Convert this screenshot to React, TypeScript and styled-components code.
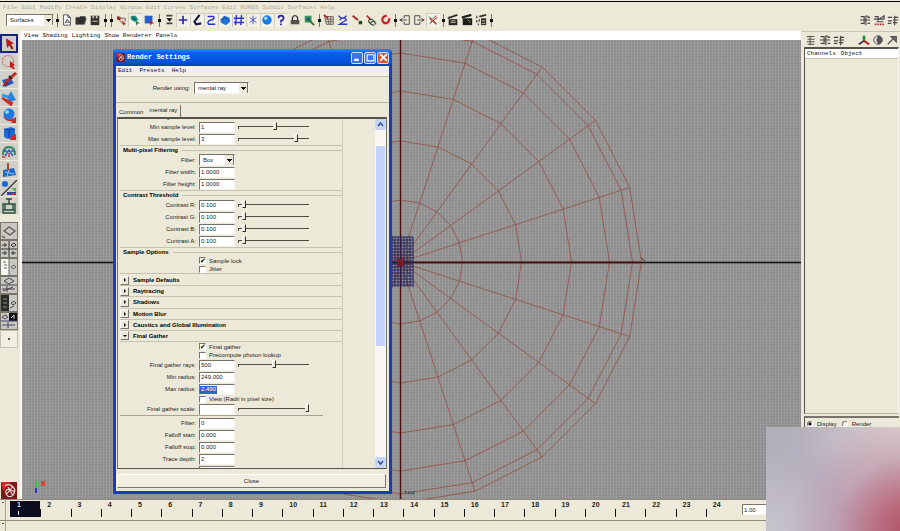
import React from "react";
import styled, { createGlobalStyle, css } from "styled-components";

const GlobalStyle = createGlobalStyle`
  *, *::before, *::after { box-sizing: border-box; }
  body { margin: 0; overflow: hidden; background: #ece9d8; }
  button, input, select { margin: 0; padding: 0; border: 0; border-radius: 0; font: inherit; color: inherit; background: none; }
`;

const sans = '"Liberation Sans", Arial, sans-serif';
const mono = '"Liberation Mono", "Courier New", monospace';
const face = "#ece9d8";

/* ---------- frame of the application ---------- */

const Page = styled.div`
  position: relative;
  display: flex;
  flex-direction: column;
  height: 100vh;
  padding-top: 1px;
  background: ${face};
  color: #222;
  font: 6px/8px ${sans};
`;

const MenuBar = styled.nav`
  display: flex;
  gap: 4px;
  height: 11px;
  padding: 2px 3px 0;
  border-top: 1px solid #000;
  font: 6px/8px ${mono};
  color: #aeab9c;
`;

const MenuItem = styled.button`
  white-space: nowrap;
`;

const Toolbar = styled.div`
  display: flex;
  align-items: center;
  height: 19px;
  padding: 0 0 3px 6px;
`;

const Spacer = styled.div`
  flex: 1;
`;

const Separator = styled.span`
  position: relative;
  width: 6px;
  height: 13px;
  background: linear-gradient(#77756a, #77756a) 3px 0 / 1px 100% no-repeat;
  &::after {
    content: "";
    position: absolute;
    left: 2px;
    top: 5px;
    width: 3px;
    height: 3px;
    background: #111;
  }
`;

const IconButton = styled.button<{ $on?: boolean }>`
  display: grid;
  place-items: center;
  width: 14px;
  height: 14px;
  ${(p) => p.$on && css`background: #f3f1e6; box-shadow: inset 1px 1px #cfccbd;`}
  svg { display: block; width: 12px; height: 12px; }
`;

const Select = styled.select<{ $w: number }>`
  appearance: none;
  width: ${(p) => p.$w}px;
  height: 12px;
  padding: 0 3px;
  font: 6px/10px ${sans};
  border: 1px solid;
  border-color: #77756a #f6f4ea #f6f4ea #77756a;
  background:
    conic-gradient(from 315deg at 50% 100%, #111 90deg, transparent 0) right 2px top 4px / 5px 3px no-repeat,
    linear-gradient(90deg, ${face} 8px, #77756a 8px) right 0 top 0 / 9px 10px no-repeat,
    #fff;
`;

const Main = styled.main`
  display: flex;
  flex: 1;
  min-height: 0;
`;

/* ---------- tool box ---------- */

const ToolBox = styled.aside`
  display: flex;
  flex-direction: column;
  align-items: center;
  width: 22px;
  padding: 3px 3px 0 1px;
  border-right: 2px solid #fbfaf4;
`;

const ToolButton = styled.button<{ $selected?: boolean; $layout?: boolean; $plain?: boolean }>`
  display: grid;
  place-items: center;
  width: 18px;
  height: 18px;
  border-bottom: 1px solid ${face};
  background: #d1cfc9;
  svg { display: block; width: 16px; height: 16px; }
  ${(p) => p.$selected && css`border: 2px solid #15247c; height: 19px; svg { width: 14px; height: 14px; }`}
  ${(p) => p.$layout && css`border: 1px solid #77756a; background: #c9c7bf;`}
  ${(p) => p.$plain && css`border: 1px solid #c5c2b3; background: #f1efe2;`}
`;

const ToolGap = styled.div`
  height: 7px;
`;

const Logo = styled.svg`
  display: block;
  width: 16px;
  height: 17px;
`;

/* ---------- viewport ---------- */

const ViewColumn = styled.section`
  display: flex;
  flex: 1;
  flex-direction: column;
  min-width: 0;
`;

const ViewMenu = styled.nav`
  display: flex;
  gap: 4px;
  height: 9px;
  padding: 0 2px;
  background: #fff;
  font: 6px/9px ${mono};
  color: #111;
`;

const Viewport = styled.div`
  flex: 1;
  min-height: 0;
  overflow: hidden;
  background:
    repeating-linear-gradient(90deg, rgba(255, 255, 255, 0.1) 0 1px, transparent 1px 3px),
    repeating-linear-gradient(rgba(255, 255, 255, 0.06) 0 1px, transparent 1px 3px),
    #8e8e8e;
  svg { display: block; width: 100%; height: 100%; }
`;

/* ---------- channel box ---------- */

const SidePanel = styled.aside`
  display: flex;
  flex-direction: column;
  width: 99px;
  padding: 0 1px 0 3px;
  border-top: 1px solid #c8c5b6;
`;

const SideIcons = styled.div`
  display: flex;
  align-items: center;
  height: 15px;
`;

const Channels = styled.div`
  flex: 1;
  border: 1px solid #f8f6ec;
  border-left: 1px solid #55534a;
  border-top: 2px solid #55534a;
  border-bottom-color: #b4b1a2;
`;

const ChannelMenu = styled.nav`
  display: flex;
  gap: 5px;
  height: 10px;
  padding: 0 2px;
  background: #fff;
  border-bottom: 1px solid #c8c5b6;
  font: 6px/9px ${mono};
  color: #111;
`;

const Layers = styled.div`
  display: flex;
  gap: 5px;
  height: 83px;
  margin-top: 2px;
  padding: 2px;
  border-left: 1px solid #55534a;
  border-top: 2px solid #77756a;
`;

const RadioLabel = styled.label`
  display: flex;
  gap: 4px;
  height: 8px;
  align-items: center;
`;

const Radio = styled.input`
  appearance: none;
  width: 6px;
  height: 6px;
  border: 1px solid;
  border-color: #77756a #fff #fff #77756a;
  border-radius: 50%;
  background: #fff;
  &:checked { background: radial-gradient(#000 1px, #fff 2px); }
`;

/* ---------- time line ---------- */

const BottomRow = styled.footer<{ $h: number }>`
  display: flex;
  height: ${(p) => p.$h}px;
  border-top: 1px solid #8f8c7e;
`;

const Handle = styled.div`
  width: 6px;
  margin-right: 4px;
  border-right: 1px solid #a5a293;
  background: linear-gradient(#555, #555) 2px 2px / 2px 1px no-repeat;
`;

const Track = styled.div`
  display: grid;
  flex: 1;
  grid-template-columns: repeat(24, 1fr);
  padding: 1px 0;
`;

const Frame = styled.div<{ $current?: boolean }>`
  padding-left: 7px;
  font: bold 7px/8px ${sans};
  color: #222;
  background: linear-gradient(#111, #111) 0 8px / 1px 8px no-repeat;
  ${(p) => p.$current && css`background: linear-gradient(#dde, #dde) 8px 10px / 1px 4px no-repeat #0c0c20; height: 16px; color: #dde;`}
`;

const TimeEnd = styled.div`
  width: 164px;
  padding: 4px 0 0 6px;
`;

/* ---------- render settings window ---------- */

const Dialog = styled.section`
  position: absolute;
  left: 113px;
  top: 49px;
  display: flex;
  flex-direction: column;
  width: 279px;
  padding: 0 3px 3px;
  background: #1a3ac2;
  border-radius: 4px 4px 0 0;
  overflow: hidden;
`;

const TitleBar = styled.header`
  display: flex;
  align-items: center;
  gap: 1px;
  height: 17px;
  margin: 0 -3px;
  padding: 0 3px;
  background: linear-gradient(#2f8bf6, #0a5bea 25%, #0753e0 75%, #0a3cb5);
  color: #fff;
  font: bold 7px/17px ${mono};
  svg { display: block; width: 9px; height: 9px; }
`;

const Title = styled.h1`
  flex: 1;
  margin: 0 0 0 1px;
  font: inherit;
`;

const CaptionButton = styled.button<{ $close?: boolean }>`
  display: grid;
  place-items: center;
  width: 12px;
  height: 12px;
  border: 1px solid #cfe0ff;
  border-radius: 2px;
  background: ${(p) => (p.$close ? "#e2532c" : "#3b74e8")};
`;

const Body = styled.div`
  background: ${face};
`;

const DialogMenu = styled.nav`
  display: flex;
  gap: 7px;
  height: 11px;
  padding: 1px 2px;
  background: #f3f1e6;
  border-bottom: 1px solid #c0bdae;
  font: 6px/8px ${mono};
  color: #111;
`;

const Renderer = styled.div`
  display: grid;
  grid-template-columns: 74px auto;
  gap: 4px;
  align-items: center;
  justify-content: start;
  height: 26px;
  padding-bottom: 3px;
  border-bottom: 1px solid #b9b6a7;
`;

const FieldLabel = styled.label`
  text-align: right;
  white-space: nowrap;
`;

const Tabs = styled.div`
  display: flex;
  height: 14px;
  padding: 2px 3px 0;
`;

const Tab = styled.button<{ $active?: boolean }>`
  height: 12px;
  padding: ${(p) => (p.$active ? "0 3px 3px 5px" : "2px 1px 0 0")};
  ${(p) => p.$active && css`border-right: 1px solid #77756a;`}
`;

const ScrollBox = styled.div`
  display: flex;
  height: 352px;
  margin: 0 2px 0 1px;
  overflow: hidden;
  border: 1px solid #77756a;
  border-top: 2px solid #55534a;
  border-bottom-color: #55534a;
`;

const Content = styled.div`
  width: 225px;
  margin-top: -5px;
  padding-left: 2px;
  border-right: 1px solid #d2cfc0;
`;

const Group = styled.section`
  margin-bottom: 1px;
  border-bottom: 1px solid #c5c2b3;
`;

const GroupTitle = styled.h2`
  display: flex;
  align-items: center;
  gap: 4px;
  height: 7px;
  margin: 0;
  padding-left: 3px;
  font: bold 6px/7px ${sans};
  color: #000;
  &::after { content: ""; flex: 1; height: 1px; background: #c5c2b3; }
`;

const Row = styled.div`
  display: grid;
  grid-template-columns: 76px 36px 71px;
  column-gap: 3px;
  align-items: center;
  height: 12px;
`;

const TextField = styled.input<{ $highlight?: boolean }>`
  width: 36px;
  height: 11px;
  padding: 0 1px;
  font: 6px/9px ${sans};
  border: 1px solid;
  border-color: #77756a #f6f4ea #f6f4ea #77756a;
  background: #fff;
  ${(p) => p.$highlight && css`background: linear-gradient(#2f62c8, #2f62c8) 0 1px / 17px 8px no-repeat #fff; color: #fff;`}
`;

const Slider = styled.input`
  appearance: none;
  display: block;
  width: 71px;
  height: 9px;
  margin-bottom: 2px;
  &::-webkit-slider-runnable-track {
    height: 9px;
    background:
      linear-gradient(#4c4b44, #4c4b44) 0 4px / 100% 1px no-repeat,
      linear-gradient(#4c4b44, #4c4b44) 0 4px / 1px 3px no-repeat;
  }
  &::-webkit-slider-thumb {
    appearance: none;
    width: 4px;
    height: 8px;
    border: 1px solid;
    border-color: #fff #33322c #33322c #fff;
    background: ${face};
  }
`;

const Check = styled.label<{ $h: number }>`
  display: flex;
  align-items: center;
  gap: 3px;
  width: fit-content;
  height: ${(p) => p.$h}px;
  margin-left: 79px;
`;

const Tick = styled.input`
  appearance: none;
  width: 7px;
  height: 7px;
  border: 1px solid;
  border-color: #77756a #fff #fff #77756a;
  background: #fff;
  font: bold 7px/6px "DejaVu Sans", sans-serif;
  &:checked::before { content: "✔"; display: block; color: #000; }
`;

const Sections = styled.div`
  display: grid;
  grid-template-rows: repeat(6, 1fr);
  height: 67px;
`;

const Section = styled.button`
  display: flex;
  align-items: center;
  gap: 4px;
  width: 100%;
  border-bottom: 1px solid #c5c2b3;
  font: bold 6px/8px ${sans};
  color: #000;
  text-align: left;
`;

const Arrow = styled.span<{ $open?: boolean }>`
  display: grid;
  place-items: center;
  width: 9px;
  height: 9px;
  border: 1px solid;
  border-color: #fff #77756a #77756a #fff;
  &::before {
    content: "";
    border: 2px solid transparent;
    ${(p) => (p.$open ? "border-top-color: #000; border-bottom: 0;" : "border-left-color: #000; border-right: 0;")}
  }
`;

const Rule = styled.hr`
  width: 203px;
  height: 1px;
  margin: 0 0 1px;
  border: 0;
  background: #a5a293;
`;

const ScrollBar = styled.div`
  display: flex;
  flex-direction: column;
  width: 11px;
  margin-left: auto;
  background: #f7f6f0;
`;

const ScrollButton = styled.button`
  height: 11px;
  border-radius: 2px;
  background: #c6d6fb;
  svg { display: block; margin: auto; }
`;

const Thumb = styled.div`
  height: 200px;
  margin: 16px 1px auto;
  border-radius: 1px;
  background: #c3d3fb;
`;

const CloseButton = styled.button`
  display: block;
  width: calc(100% - 4px);
  height: 14px;
  margin: 0 2px 0 1px;
  border: 1px solid;
  border-color: #fff #77756a #77756a #fff;
  background: #f1efe2;
`;

const DialogFoot = styled.div`
  height: 22px;
  padding-top: 5px;
`;

/* ---------- tinted pane in the corner ---------- */

const Haze = styled.div`
  position: absolute;
  right: 0;
  bottom: 0;
  width: 134px;
  height: 104px;
  background:
    radial-gradient(circle at 108% 100%, #b04f62 0, rgba(184, 92, 112, 0.8) 18%, rgba(190, 140, 160, 0.45) 42%, transparent 68%),
    radial-gradient(circle at 100% 0, #dcd2d0 0, transparent 60%),
    radial-gradient(circle at 0 100%, #c9c5cc 0, transparent 45%),
    linear-gradient(120deg, #b2b0b8, #b7afc1 45%, #c0b0c0);
`;

/* ---------- drawings ---------- */

const glyphs: Record<string, React.ReactNode> = {
  file: <g fill="#fff" stroke="#444"><path d="M3 1h5l3 3v9H3zM8 1v3h3" /><path d="M5 11l2-5 3 4-5-1" fill="none" /></g>,
  open: <path d="M1 4h4l1-1h6v2h1l-2 7H1z" fill="#2e2e28" stroke="#555" />,
  save: <g><path d="M2 2h10v11H2z" fill="#33332e" /><path d="M4 2h2v3H4zM8 2h2v3H8zM4 8h6v1H4z" fill="#c9c6b8" /></g>,
  selRed: <g><path d="M3 2l4 2-1 4-4-2z" fill="#a12525" /><path d="M7 5h5v4M6 8l3 4" stroke="#555" fill="none" /><path d="M8 7l5 5-2 0-1 2z" fill="#c02020" /></g>,
  selGreen: <g><path d="M2 2h6l3 5-5 2-4-3z" fill="#179b7c" /><path d="M4 4l4 3" stroke="#0b4f8f" strokeWidth="2" /><path d="M7 7l6 4-3 0-1 3z" fill="#2f7d36" /></g>,
  selBlue: <g><path d="M2 2h9v9H2z" fill="#1d62d0" /><path d="M7 7l6 4-3 0-1 3z" fill="#c02020" /></g>,
  list: <g><path d="M4 2h7M4 11h7" stroke="#444" strokeWidth="2" /><path d="M4 5h7l-3.500 4z" fill="#111" /></g>,
  plus: <path d="M7 2v10M2 7h10" stroke="#2a2ab0" strokeWidth="2" />,
  joint: <path d="M10 1L4 9l2 3 6-1" stroke="#181848" strokeWidth="2.500" fill="none" />,
  curve: <path d="M3 3h7q2 3-3 4t-3 5h8" stroke="#2434c8" strokeWidth="1.700" fill="none" />,
  blob: <g><path d="M2 6l4-4 6 2 1 5-5 4-6-3z" fill="#2277d8" /><path d="M3 8l4-4 5 4" stroke="#153c9a" fill="none" /></g>,
  lattice: <path d="M4 1L3 13M10 1L9 13M1 5h12M1 10h12" stroke="#3038c8" strokeWidth="1.700" />,
  star: <path d="M7 2v10M3 4l8 6M11 4l-8 6" stroke="#3a48c0" />,
  sphere: <g><circle cx="7" cy="7" r="5.500" fill="#1f7be0" /><circle cx="5.500" cy="5" r="2" fill="#a7dcff" /></g>,
  help: <path d="M4 5q0-3 3-3t3 3q0 2-3 3v2M7 11v2" stroke="#2020a8" strokeWidth="2" fill="none" />,
  lock: <g><path d="M4 7V4q3-4 6 0v3" stroke="#333" strokeWidth="1.500" fill="none" /><path d="M2 7h10v5H2z" fill="#55544c" /></g>,
  hilite: <g><path d="M2 2h8v8H2z" fill="#3b9a63" /><path d="M4 4h4v4H4z" fill="#1d5f80" /><path d="M7 7l6 6" stroke="#256b2f" strokeWidth="2" /></g>,
  snapGrid: <g fill="none"><path d="M2 3h10v9M2 3l2 9h8M5 3l2 9M9 3v9M3 6h9M3 9h9" stroke="#5d5248" /><path d="M1 1l5 4" stroke="#b02020" strokeWidth="2" /></g>,
  snapCurve: <path d="M2 2q4 6 9 0M3 7q5-5 8 0-4 2-8 5h9" stroke="#3038b8" strokeWidth="1.600" fill="none" />,
  snapPoint: <g><path d="M2 2l6 5" stroke="#b02828" strokeWidth="2.500" /><path d="M9 8h4v4H9z" fill="#164b2a" /></g>,
  snapPlane: <g fill="none"><path d="M2 2l5 5" stroke="#b02828" strokeWidth="2" /><path d="M4 8q3-4 6 0t3 4M6 11q3-4 6-2M4 8q2 5 7 5" stroke="#375540" strokeWidth="1.500" /></g>,
  magnet: <path d="M9 2q-6 1-5 6 3 5 7 1 1-2 1-4" stroke="#c02626" strokeWidth="2.700" fill="none" />,
  input: <path d="M6 2h6v10H6V9M6 5V2M1 7h8M4 5L1 7l3 2" stroke="#333" fill="none" />,
  output: <path d="M8 5V2H2v10h6V9M5 7h8M10 5l3 2-3 2" stroke="#333" fill="none" />,
  history: <g fill="none"><path d="M2 3l4 3 5-4M3 12l3-4M11 12L8 8" stroke="#555" /><path d="M4 10l8-6M3 5l8 7" stroke="#bf3434" strokeWidth="1.300" /></g>,
  clap: <g><path d="M2 6h10v7H2z" fill="#26261f" /><path d="M1 5l11-4M2 4l3 0" stroke="#26261f" strokeWidth="2" /><path d="M4 8h6M4 10h6" stroke="#cfccba" /></g>,
  clapDark: <g><path d="M2 5h11v8H2z" fill="#1d1d18" /><path d="M1 4l11-3" stroke="#1d1d18" strokeWidth="2.500" /><path d="M8 7l3 3" stroke="#bbb" /></g>,
  clapDots: <g><path d="M7 5h6v8H7z" fill="#33332c" /><path d="M5 3l8-2" stroke="#33332c" strokeWidth="2" /><path d="M2 2v3M2 7v3M5 6v3M4 11v2" stroke="#444" strokeWidth="1.500" /><path d="M8 8h4M8 11h4" stroke="#ccc" /></g>,
  boxA: <path d="M2 3h4v9M8 2v11M1 7h12M10 4h3M10 11h3M8 2l3 1M2 11h4" stroke="#444" strokeWidth="1.300" fill="none" />,
  boxB: <g fill="none"><path d="M2 3h4v5M7 6l6-4v4M1 6h12M4 9h8" stroke="#444" strokeWidth="1.300" /><path d="M2 12h11" stroke="#b33" strokeDasharray="2 1" strokeWidth="2" /></g>,
  boxC: <path d="M1 4h5M1 8h5M1 11h4M7 7h6M9 2v11M8 4h5M7 10h5" stroke="#444" strokeWidth="1.300" />,
  boxD: <path d="M2 3h9M3 6h8M2 9h9M3 12h8M6 2v11" stroke="#555" strokeWidth="1.200" />,
  axis: <g><path d="M7 2v6" stroke="#1a8a2c" strokeWidth="3" /><path d="M7 8l6 4" stroke="#c22" strokeWidth="2.500" /><path d="M7 8l-6 4" stroke="#235" strokeWidth="2" /></g>,
  half: <g><circle cx="7" cy="7" r="5" fill="#ddd" stroke="#555" /><path d="M7 2a5 5 0 0 1 0 10L5 7z" fill="#555" /></g>,
  arrow: <path d="M2 12l7-7M6 3h6v6z" stroke="#555" fill="#777" strokeWidth="1.500" />,
};

const tools: Record<string, React.ReactNode> = {
  select: <path d="M5 2l8 5-3 1 3 5-2 1-3-5-2 3z" fill="#c01818" stroke="#701010" strokeWidth=".5" />,
  lasso: <g><circle cx="7" cy="7" r="5.500" fill="none" stroke="#c25a55" strokeDasharray="2 1" /><path d="M9 7l5 4-2 1 2 3-2 0-2-2-1 1z" fill="#c01818" /></g>,
  paint: <g><path d="M1 8l8-2 4 5-9 4z" fill="#2358c0" /><path d="M4 11l11-10" stroke="#c02a20" strokeWidth="3" /><path d="M8 4l3 3" stroke="#222" strokeWidth="2" /><path d="M2 14l5-3" stroke="#a01818" strokeWidth="2" /></g>,
  move: <g><path d="M10 1l5 9-6 2-3-4z" fill="#2384dc" /><path d="M1 5l6 2" stroke="#2a9fe0" strokeWidth="3" /><path d="M1 8l10 5-1 2z" fill="#d02a20" stroke="#d02a20" strokeWidth="2" /></g>,
  rotate: <g><path d="M2 8q6 6 13 1v6h-5l1-2q-7 1-9-5z" fill="#d02a20" /><circle cx="8" cy="6" r="5.500" fill="#1d7be0" /><circle cx="6" cy="4" r="2" fill="#8bd0ff" /></g>,
  scale: <g><path d="M3 3l7-2 4 2v8l-7 2-4-2z" fill="#1c6bd2" /><path d="M3 3l5 1 6-1M8 4v8" stroke="#0d3f90" fill="none" /><path d="M10 10l5-2v6l-6 0z" fill="#d02a20" /></g>,
  manip: <g fill="none"><path d="M2 11q0-8 6-8t6 8" stroke="#2a8a58" strokeWidth="2" /><path d="M4 12l4-6 4 6M2 7h4M10 7h4" stroke="#2560c0" strokeWidth="1.500" /><path d="M8 9v4M1 13h3" stroke="#c03a30" strokeWidth="1.500" /></g>,
  soft: <g><path d="M2 8l11-2 2 7-13 2z" fill="#1d68cc" /><path d="M7 1v8" stroke="#a05020" strokeWidth="2" /><path d="M4 10l9 2M8 8l-2 6" stroke="#8cc6ff" /></g>,
  show: <g><circle cx="4" cy="4" r="3" fill="#1d68d8" /><path d="M10 8h5v4z" fill="#49b04d" /><path d="M6 12h9v3H6z" fill="#3340a8" /><path d="M10 13h5v2h-5z" fill="#c03030" /><path d="M0 16L16 0" stroke="#222" strokeWidth="1.200" /></g>,
  last: <g fill="none" stroke="#27503a" strokeWidth="1.400"><path d="M2 6h12v9H2zM2 12h12M8 6V1M5 1h6M4 6v6M12 6v6" /></g>,
  single: <path d="M3 8l5-4 6 4-5 4zM1 13l3 2" fill="none" stroke="#555" strokeWidth="1.200" />,
  four: <path d="M8 0v16M0 8h16M1 4h5M4 2v4M10 4l3-2 2 2-3 2zM1 12h5M4 10v4M10 12h5M12 10v4" fill="none" stroke="#333" />,
  outline: <g><path d="M0 0h8v16H0z" fill="#f5f5f0" /><path d="M2 3h3M3 6h3M3 9h3M8 0v16M10 8l3-2 2 2-3 2z" stroke="#666" fill="none" /></g>,
  graph: <path d="M0 8h16M3 4l5-3 5 3-5 3zM1 12h13M6 9v6M2 14l10-4" fill="none" stroke="#445" />,
  hyper: <g><path d="M0 0h8v16H0z" fill="#282c28" /><path d="M2 4h4M2 8h4M2 12h4" stroke="#888" /><path d="M10 8l3-2 2 2-3 2zM9 13l4-2" stroke="#444" fill="none" /></g>,
  render: <g><path d="M8 0h8v8H8z" fill="#111" /><path d="M10 5l3-3v4" stroke="#ddd" fill="none" /><path d="M1 4l3-2 3 2-3 2zM0 8h16M1 12h13M7 9v6" stroke="#446" fill="none" /></g>,
  more: <circle cx="8" cy="8" r="1" fill="#222" />,
};

const Glyph = ({ name }: { name: string }) => <svg viewBox="0 0 14 14" aria-hidden="true">{glyphs[name]}</svg>;

const Icons = ({ names, on = [] }: { names: string[]; on?: string[] }) => (
  <>
    {names.map((n) => (
      <IconButton key={n} $on={on.includes(n)} aria-label={n}><Glyph name={n} /></IconButton>
    ))}
  </>
);

const CX = 378.5;
const CY = 222;
const radii = [62, 121, 171, 209, 232, 241];
const spokes = Array.from({ length: 20 }, (_, i) => (i * Math.PI) / 10);
const at = (r: number, a: number) => `${CX + r * Math.cos(a)},${CY + r * Math.sin(a)}`;
const steps = (from: number, to: number, by: number) =>
  Array.from({ length: Math.floor((to - from) / by) + 1 }, (_, i) => from + i * by);

const Wireframe = () => (
  <svg viewBox="0 0 779 459" preserveAspectRatio="xMidYMid slice" role="img" aria-label="Top view">
    <g stroke="#94493a" strokeWidth="0.750" fill="none">
      {radii.map((r) => <polygon key={r} points={spokes.map((a) => at(r, a)).join(" ")} />)}
      {spokes.map((a) => <path key={a} d={`M${at(0, a)}L${at(241, a)}`} />)}
    </g>
    <path d="M0 222.500H779" stroke="#151010" strokeWidth="1.300" />
    <path d="M378.500 0V459" stroke="#4a0d0d" strokeWidth="1.300" />
    <path d="M379 222.500H619" stroke="#4a0d0d" strokeWidth="1.300" />
    <g stroke="#25255f" strokeWidth="1">
      {steps(355, 391, 3).map((x) => <path key={x} d={`M${x} 197V247`} />)}
      {steps(197, 247, 3).map((y) => <path key={y} d={`M354 ${y}H391`} />)}
    </g>
    <path d="M375 219h7v7h-7z" fill="#7c1c22" />
    <path d="M619 218l4 3" stroke="#4b3020" />
    <text x="382" y="454" fontFamily="Liberation Mono, monospace" fontSize="6" fill="#123c20">top</text>
    <path d="M14 441v7" stroke="#2ec23c" strokeWidth="2" />
    <path d="M14 448v5" stroke="#2434c8" strokeWidth="2" />
    <path d="M19 441l4 5M23 441l-4 5" stroke="#d8391f" strokeWidth="1.500" />
  </svg>
);

const Mark = () => (
  <Logo viewBox="0 0 16 17" aria-label="Maya">
    <path d="M0 0h16v17H0z" fill="#7c1719" />
    <path d="M0 0h10L2 9z" fill="#d8262c" />
    <path d="M4 4q4-3 8 1t-1 9q-5 2-6-3t5-3 1 5M7 5l4 7M5 13L12 4" fill="none" stroke="#e9d5cf" strokeWidth="1.200" />
  </Logo>
);

/* ---------- dialog parts ---------- */

type FieldProps = { label: string; value: string; slider?: number; highlight?: boolean };

const Field = ({ label, value, slider, highlight }: FieldProps) => {
  const id = React.useId();
  return (
    <Row>
      <FieldLabel htmlFor={id}>{label}:</FieldLabel>
      <TextField id={id} defaultValue={value} $highlight={highlight} />
      {slider !== undefined && <Slider type="range" defaultValue={slider} aria-label={`${label} slider`} />}
    </Row>
  );
};

const CheckRow = ({ label, checked, h }: { label: string; checked?: boolean; h: number }) => (
  <Check $h={h}>
    <Tick type="checkbox" defaultChecked={checked} />
    {label}
  </Check>
);

const RenderSettings = () => (
  <Dialog aria-label="Render Settings">
    <TitleBar>
      <Mark />
      <Title>Render Settings</Title>
      <CaptionButton aria-label="Minimize"><svg viewBox="0 0 8 8"><path d="M1 6h4" stroke="#fff" strokeWidth="2" /></svg></CaptionButton>
      <CaptionButton aria-label="Maximize"><svg viewBox="0 0 8 8"><path d="M1 1.500h6V7H1z" stroke="#fff" fill="none" /></svg></CaptionButton>
      <CaptionButton $close aria-label="Close window"><svg viewBox="0 0 8 8"><path d="M1 1l6 6M7 1L1 7" stroke="#fff" strokeWidth="1.500" /></svg></CaptionButton>
    </TitleBar>
    <Body>
      <DialogMenu>
        {["Edit", "Presets", "Help"].map((m) => <MenuItem key={m}>{m}</MenuItem>)}
      </DialogMenu>
      <Renderer>
        <FieldLabel htmlFor="renderer">Render using:</FieldLabel>
        <Select id="renderer" $w={55}><option>mental ray</option></Select>
      </Renderer>
      <Tabs>
        <Tab>Common</Tab>
        <Tab $active>mental ray</Tab>
      </Tabs>
      <ScrollBox>
        <Content>
          <Group>
            <GroupTitle>Number of Samples</GroupTitle>
            <Field label="Min sample level" value="1" slider={52} />
            <Field label="Max sample level" value="3" slider={84} />
          </Group>
          <Group>
            <GroupTitle>Multi-pixel Filtering</GroupTitle>
            <Row>
              <FieldLabel htmlFor="filter">Filter:</FieldLabel>
              <Select id="filter" $w={36}><option>Box</option></Select>
            </Row>
            <Field label="Filter width" value="1.0000" />
            <Field label="Filter height" value="1.0000" />
          </Group>
          <Group>
            <GroupTitle>Contrast Threshold</GroupTitle>
            {["R", "G", "B", "A"].map((c) => <Field key={c} label={`Contrast ${c}`} value="0.100" slider={6} />)}
          </Group>
          <Group>
            <GroupTitle>Sample Options</GroupTitle>
            <CheckRow label="Sample lock" checked h={9} />
            <CheckRow label="Jitter" h={8} />
          </Group>
          <Sections>
            {["Sample Defaults", "Raytracing", "Shadows", "Motion Blur", "Caustics and Global Illumination", "Final Gather"].map((s) => (
              <Section key={s} aria-expanded={s === "Final Gather"}><Arrow $open={s === "Final Gather"} />{s}</Section>
            ))}
          </Sections>
          <CheckRow label="Final gather" checked h={9} />
          <CheckRow label="Precompute photon lookup" h={8} />
          <Field label="Final gather rays" value="500" slider={50} />
          <Field label="Min radius" value="249.000" />
          <Field label="Max radius" value="2.490" highlight />
          <CheckRow label="View (Radii in pixel size)" h={8} />
          <Field label="Final gather scale" value="" slider={100} />
          <Rule />
          <Field label="Filter" value="0" />
          <Field label="Falloff start" value="0.000" />
          <Field label="Falloff stop" value="0.000" />
          <Field label="Trace depth" value="2" />
          <Field label="Trace reflection" value="1" />
        </Content>
        <ScrollBar>
          <ScrollButton aria-label="Scroll up"><svg width="7" height="7"><path d="M1 5l2.500-3L6 5" stroke="#37549c" strokeWidth="1.500" fill="none" /></svg></ScrollButton>
          <Thumb />
          <ScrollButton aria-label="Scroll down"><svg width="7" height="7"><path d="M1 2l2.500 3L6 2" stroke="#37549c" strokeWidth="1.500" fill="none" /></svg></ScrollButton>
        </ScrollBar>
      </ScrollBox>
      <DialogFoot><CloseButton>Close</CloseButton></DialogFoot>
    </Body>
  </Dialog>
);

export default function App() {
  return (
    <Page>
      <GlobalStyle />
      <MenuBar>
        {["File", "Edit", "Modify", "Create", "Display", "Window", "Edit Curves", "Surfaces", "Edit NURBS", "Subdiv Surfaces", "Help"].map((m) => (
          <MenuItem key={m} disabled>{m}</MenuItem>
        ))}
      </MenuBar>
      <Toolbar>
        <Select $w={48} aria-label="Menu set"><option>Surfaces</option></Select>
        <Separator />
        <Icons names={["file", "open", "save"]} />
        <Separator />
        <Separator />
        <Icons names={["selRed", "selGreen", "selBlue"]} on={["selGreen"]} />
        <Separator />
        <Icons
          names={["list", "plus", "joint", "curve", "blob", "lattice", "star", "sphere", "help", "lock", "hilite"]}
          on={["plus", "joint", "curve", "blob", "lattice", "star", "sphere", "help"]}
        />
        <Separator />
        <Icons names={["snapGrid", "snapCurve", "snapPoint", "snapPlane", "magnet"]} />
        <Separator />
        <Icons names={["input", "output", "history"]} on={["history"]} />
        <Separator />
        <Icons names={["clap", "clapDark", "clapDots"]} />
        <Separator />
        <Spacer />
        <Icons names={["boxA", "boxB", "boxC"]} />
      </Toolbar>
      <Main>
        <ToolBox>
          {["select", "lasso", "paint", "move", "rotate", "scale", "manip", "soft", "show", "last"].map((t) => (
            <ToolButton key={t} $selected={t === "select"} aria-label={t}><svg viewBox="0 0 16 16">{tools[t]}</svg></ToolButton>
          ))}
          <ToolGap />
          {["single", "four", "outline", "graph", "hyper", "render", "more"].map((t) => (
            <ToolButton key={t} $layout $plain={t === "more"} aria-label={t}><svg viewBox="0 0 16 16">{tools[t]}</svg></ToolButton>
          ))}
          <Spacer />
          <Mark />
        </ToolBox>
        <ViewColumn>
          <ViewMenu>
            {["View", "Shading", "Lighting", "Show", "Renderer", "Panels"].map((m) => <MenuItem key={m}>{m}</MenuItem>)}
          </ViewMenu>
          <Viewport><Wireframe /></Viewport>
        </ViewColumn>
        <SidePanel>
          <SideIcons>
            <Icons names={["boxD", "boxA", "boxC"]} />
            <Spacer />
            <Icons names={["axis", "half", "arrow"]} />
          </SideIcons>
          <Channels>
            <ChannelMenu><MenuItem>Channels</MenuItem><MenuItem>Object</MenuItem></ChannelMenu>
          </Channels>
          <Layers>
            <RadioLabel><Radio type="radio" name="layer" defaultChecked />Display</RadioLabel>
            <RadioLabel><Radio type="radio" name="layer" />Render</RadioLabel>
          </Layers>
        </SidePanel>
      </Main>
      <BottomRow $h={21}>
        <Handle />
        <Track>
          {Array.from({ length: 24 }, (_, i) => <Frame key={i} $current={i === 0}>{i + 1}</Frame>)}
        </Track>
        <TimeEnd><TextField defaultValue="1.00" aria-label="Current time" /></TimeEnd>
      </BottomRow>
      <BottomRow $h={11}><Handle /></BottomRow>
      <RenderSettings />
      <Haze />
    </Page>
  );
}
